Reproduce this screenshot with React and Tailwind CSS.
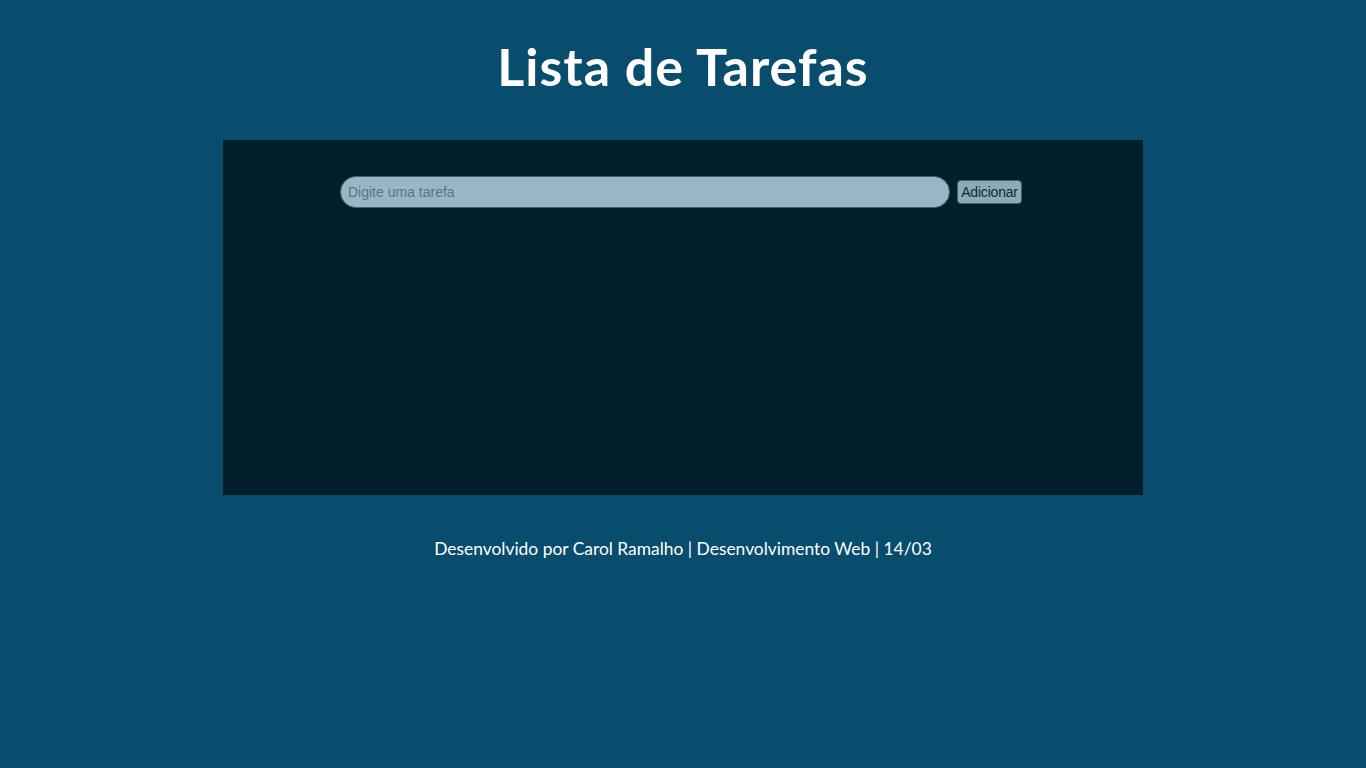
import React, { useState } from 'react';

const App = () => {
  const [task, setTask] = useState('');
  const [tasks, setTasks] = useState([]);

  const addTask = () => {
    if (task.trim() === '') return;
    setTasks([...tasks, task.trim()]);
    setTask('');
  };

  return (
    <div className="min-h-screen bg-[#084c6e] flex flex-col items-center" style={{ fontFamily: 'Lato, "Open Sans", sans-serif' }}>
      <h1 className="mt-[33px] h-[67px] text-white text-[52px] leading-[67px] font-bold tracking-[1px]">
        Lista de Tarefas
      </h1>

      <main className="mt-[40px] w-[920px] h-[355px] bg-[#021f2c] flex flex-col items-center pt-[36px]">
        <div className="flex items-center gap-[7px] mr-[4px]">
          <input
            type="text"
            value={task}
            onChange={(e) => setTask(e.target.value)}
            placeholder="Digite uma tarefa"
            className="w-[610px] h-[32px] rounded-full bg-[#98b7c4] border border-[#3f6374] px-[7px] text-[14px] text-[#1c3440] placeholder:text-[#587684] outline-none"
            style={{ fontFamily: '"Liberation Sans", Arial, sans-serif' }}
          />
          <button
            onClick={addTask}
            className="h-[24px] w-[65px] px-0 rounded-[4px] bg-[#8fa9b5] border border-[#3f6374] text-[14px] text-[#102a36] tracking-[-0.2px]"
            style={{ fontFamily: '"Liberation Sans", Arial, sans-serif' }}
          >
            Adicionar
          </button>
        </div>
        <ul className="mt-4 w-[610px] text-white">
          {tasks.map((t, i) => (
            <li key={i} className="py-1">{t}</li>
          ))}
        </ul>
      </main>

      <footer className="mt-[41px] text-white text-[17.4px]">
        Desenvolvido por Carol Ramalho | Desenvolvimento Web | 14/03
      </footer>
    </div>
  );
};

export default App;
